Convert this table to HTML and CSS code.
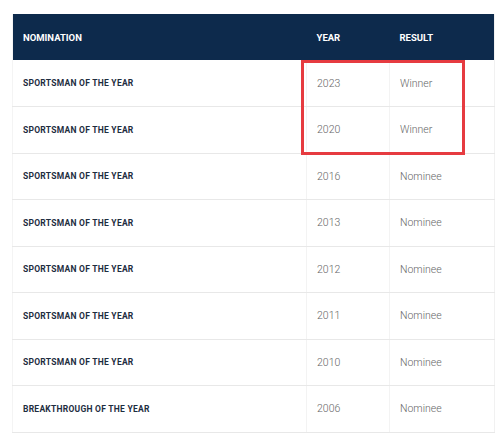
FILE: index.html
```html
<!DOCTYPE html>
<html>
<head>
<meta charset="utf-8">
<link rel="stylesheet" href="styles.css">
</head>
<body>
<div class="wrap">
  <table class="awards">
    <thead>
      <tr><th class="c-nom">NOMINATION</th><th class="c-year">YEAR</th><th class="c-res">RESULT</th></tr>
    </thead>
    <tbody>
      <tr><td class="nom">SPORTSMAN OF THE YEAR</td><td>2023</td><td>Winner</td></tr>
      <tr><td class="nom">SPORTSMAN OF THE YEAR</td><td>2020</td><td>Winner</td></tr>
      <tr><td class="nom">SPORTSMAN OF THE YEAR</td><td>2016</td><td>Nominee</td></tr>
      <tr><td class="nom">SPORTSMAN OF THE YEAR</td><td>2013</td><td>Nominee</td></tr>
      <tr><td class="nom">SPORTSMAN OF THE YEAR</td><td>2012</td><td>Nominee</td></tr>
      <tr><td class="nom">SPORTSMAN OF THE YEAR</td><td>2011</td><td>Nominee</td></tr>
      <tr><td class="nom">SPORTSMAN OF THE YEAR</td><td>2010</td><td>Nominee</td></tr>
      <tr><td class="nom">BREAKTHROUGH OF THE YEAR</td><td>2006</td><td>Nominee</td></tr>
    </tbody>
  </table>
  <div class="highlight"></div>
</div>
</body>
</html>
```

FILE: styles.css
```css
html, body {
  margin: 0;
  padding: 0;
  background: #ffffff;
}
body {
  padding: 14px 6px 0 12px;
}
.wrap {
  position: relative;
  width: 482px;
}
.awards {
  width: 482px;
  border-collapse: collapse;
  table-layout: fixed;
  border-right: 1px solid #f1f1f1;
  border-left: 1px solid #f4f4f4;
}
.c-nom { width: 294px; }
.c-year { width: 83px; }
.c-res { width: 105px; }
.awards th {
  background: #0d2a4c;
  color: #ffffff;
  font-family: Roboto, "Liberation Sans", sans-serif;
  font-weight: 700;
  font-size: 9.5px;
  letter-spacing: 0;
  text-align: left;
  height: 46px;
  padding: 0 0 0 10px;
  box-sizing: border-box;
}
.awards td {
  height: 46.5px;
  box-sizing: border-box;
  padding: 0 0 0 10px;
  border-bottom: 1px solid #e8e8e8;
  border-left: 1px solid #f3f3f3;
  font-family: Roboto, "Liberation Sans", sans-serif;
  font-weight: 300;
  font-size: 10.5px;
  color: #666666;
}
.awards td.nom {
  border-left: none;
  font-family: Roboto, "Liberation Sans", sans-serif;
  font-weight: 700;
  font-size: 8.5px;
  letter-spacing: 0.25px;
  color: #1e2d3f;
}
.highlight {
  position: absolute;
  left: 289px;
  top: 46px;
  width: 164px;
  height: 95px;
  box-sizing: border-box;
  border: 3.5px solid #e63b40;
}
```
